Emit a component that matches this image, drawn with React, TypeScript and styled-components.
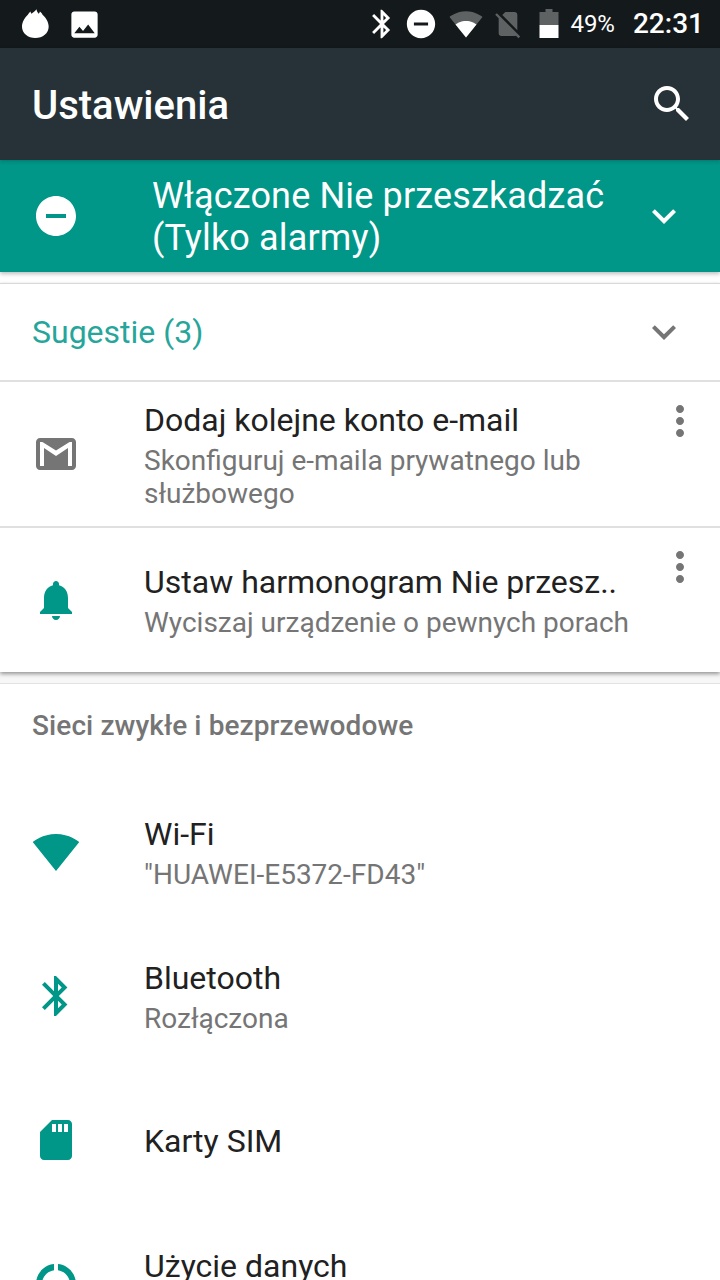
import React, { FunctionComponent } from 'react'
import styled, { createGlobalStyle } from 'styled-components'

const TEAL = '#009688'
const GREY = '#757575'

const PATHS = {
	search: 'M15.5 14h-.79l-.28-.27C15.41 12.59 16 11.11 16 9.5 16 5.91 13.09 3 9.5 3S3 5.91 3 9.5 5.91 16 9.5 16c1.61 0 3.09-.59 4.23-1.57l.27.28v.79l5 4.99L20.49 19l-4.99-5zm-6 0C7.01 14 5 11.99 5 9.5S7.01 5 9.5 5 14 7.01 14 9.5 11.99 14 9.5 14z',
	dnd: 'M12 2C6.48 2 2 6.48 2 12s4.48 10 10 10 10-4.48 10-10S17.52 2 12 2zm5 11H7v-2h10v2z',
	chevron: 'M7.41 8.59L12 13.17l4.59-4.58L18 10l-6 6-6-6 1.41-1.41z',
	more: 'M12 8c1.1 0 2-.9 2-2s-.9-2-2-2-2 .9-2 2 .9 2 2 2zm0 2c-1.1 0-2 .9-2 2s.9 2 2 2 2-.9 2-2-.9-2-2-2zm0 6c-1.1 0-2 .9-2 2s.9 2 2 2 2-.9 2-2-.9-2-2-2z',
	mail: 'M20 4H4c-1.1 0-1.99.9-1.99 2L2 18c0 1.1.9 2 2 2h16c1.1 0 2-.9 2-2V6c0-1.1-.9-2-2-2zm0 14h-2V9l-6 3.99L6 9v9H4V6h1.2l6.8 4.25L18.8 6H20v12z',
	bell: 'M12 22c1.1 0 2-.9 2-2h-4c0 1.1.89 2 2 2zm6-6v-5c0-3.07-1.64-5.64-4.5-6.32V4c0-.83-.67-1.5-1.5-1.5s-1.5.67-1.5 1.5v.68C7.63 5.36 6 7.92 6 11v5l-2 2v1h16v-1l-2-2z',
	wifi: 'M12.01 21.49L23.64 7c-.45-.34-4.93-4-11.64-4C5.28 3 .81 6.66.36 7l11.63 14.49.01.01.01-.01z',
	bluetooth: 'M17.71 7.71L12 2h-1v7.59L6.41 5 5 6.41 10.59 12 5 17.59 6.41 19 11 14.41V22h1l5.71-5.71-4.3-4.29 4.3-4.29zM13 5.83l1.88 1.88L13 9.59V5.83zm1.88 10.46L13 18.17v-3.76l1.88 1.88z',
	sim: 'M18 2h-8L4.02 8 4 20c0 1.1.9 2 2 2h12c1.1 0 2-.9 2-2V4c0-1.1-.9-2-2-2zm-6 6h-2V4h2v4zm3 0h-2V4h2v4zm3 0h-2V4h2v4z',
	data: 'M13 2.05v3.03c3.39.49 6 3.39 6 6.92 0 .9-.18 1.75-.48 2.54l2.6 1.53c.56-1.24.88-2.62.88-4.07 0-5.18-3.95-9.45-9-9.95zM12 19c-3.87 0-7-3.13-7-7 0-3.53 2.61-6.43 6-6.92V2.05c-5.06.5-9 4.76-9 9.95 0 5.52 4.47 10 9.99 10 3.31 0 6.24-1.61 8.06-4.09l-2.6-1.53C16.17 17.98 14.21 19 12 19z',
	fire: 'M12.4 1c.2 1.500.8 2.600 1.600 3.300.5-.4.8-1 .9-1.700 1 .7 1.600 1.500 2 2.400 2.700 2.300 4.600 5.600 4.600 9 0 4.900-4.500 8.500-10 8.500S1.500 18.900 1.500 14c0-3.400 1.900-6.600 4.400-9 .5-.9 1.100-1.700 2-2.300.1.700.3 1.200.7 1.600C9.800 3.500 11.400 2.300 12.400 1z',
	photo: 'M21 19V5c0-1.1-.9-2-2-2H5c-1.1 0-2 .9-2 2v14c0 1.1.9 2 2 2h14c1.1 0 2-.9 2-2zM8.500 13.500l2.500 3.010L14.500 12l4.500 6H5l3.500-4.500z',
	simOff: 'M19 5c0-1.100-.9-2-2-2h-7L7.700 5.300 19 16.600V5zM3.650 3.880L2.380 5.150 5 7.770V19c0 1.100.9 2 2 2h10c.35 0 .68-.1.97-.26l1.880 1.880 1.270-1.270L3.650 3.880z',
}

const GlobalStyle = createGlobalStyle`
	html,
	body {
		margin: 0;
		padding: 0;
		background: #fff;
	}

	body {
		font-family: Roboto, 'Noto Sans', sans-serif;
	}
`

const Screen = styled.div`
	width: 720px;
	height: 1280px;
	overflow: hidden;
	display: flex;
	flex-direction: column;
	background: #fff;
`

const StatusBar = styled.div`
	height: 48px;
	flex: none;
	display: flex;
	align-items: center;
	justify-content: space-between;
	background: #14191c;
	color: #fff;
`

const StatusGroup = styled.div<{ $left?: boolean }>`
	display: flex;
	align-items: center;
	padding: ${(props) => (props.$left ? '0 0 0 20px' : '0 16px 0 0')};
`

const Glyph = styled.svg<{ $size: number; $gap?: number; $color?: string }>`
	flex: none;
	display: block;
	width: ${(props) => props.$size}px;
	height: ${(props) => props.$size}px;
	margin-left: ${(props) => props.$gap ?? 0}px;
	fill: ${(props) => props.$color ?? 'currentColor'};
`

const BatteryText = styled.span`
	font-size: 24px;
	margin-left: 6px;
	line-height: 48px;
`

const Clock = styled.span`
	font-size: 28px;
	font-weight: 500;
	margin-left: 18px;
	line-height: 48px;
`

const Toolbar = styled.div`
	height: 112px;
	flex: none;
	display: flex;
	align-items: center;
	justify-content: space-between;
	padding: 0 24px 0 32px;
	box-sizing: border-box;
	background: #263238;
	color: #fff;
	position: relative;
	z-index: 3;
	box-shadow: 0 1px 4px rgba(0, 0, 0, 0.22);
`

const ToolbarTitle = styled.div`
	font-size: 40px;
	font-weight: 500;
	padding-top: 2px;
`

const Banner = styled.div`
	height: 112px;
	flex: none;
	display: flex;
	align-items: center;
	padding: 0 32px;
	box-sizing: border-box;
	background: ${TEAL};
	color: #fff;
	box-shadow: 0 2px 4px rgba(0, 0, 0, 0.25);
	position: relative;
	z-index: 2;
`

const BannerText = styled.div`
	flex: 1;
	font-size: 36px;
	line-height: 42px;
	letter-spacing: 0.15px;
	padding: 2px 0 0 72px;
`

const Card = styled.div`
	flex: none;
	margin-top: 11px;
	background: #fff;
	border-top: 1px solid #d8d8d8;
	box-shadow: 0 2px 4px rgba(0, 0, 0, 0.4);
	position: relative;
	z-index: 1;
`

const Backdrop = styled.div`
	flex: none;
	height: 12px;
	background: #f7f7f7;
	border-bottom: 1px solid #e2e2e2;
	box-sizing: border-box;
`

const CardHeader = styled.div`
	height: 98px;
	display: flex;
	align-items: center;
	padding: 0 32px;
	box-sizing: border-box;
	border-bottom: 2px solid #e0e0e0;
`

const CardTitle = styled.div`
	flex: 1;
	font-size: 32px;
	color: #26a69a;
`

const Suggestion = styled.div<{ $height: number; $divider?: boolean }>`
	height: ${(props) => props.$height}px;
	box-sizing: border-box;
	display: flex;
	align-items: center;
	padding: 0 16px 0 32px;
	border-bottom: ${(props) => (props.$divider ? '2px solid #e0e0e0' : 'none')};
`

const RowBody = styled.div<{ $nudge?: number }>`
	flex: 1;
	min-width: 0;
	padding: ${(props) => props.$nudge ?? 0}px 0 0 64px;
`

const Title = styled.div`
	font-size: 32px;
	line-height: 40px;
	color: #212121;
`

const Summary = styled.div`
	font-size: 28px;
	line-height: 33px;
	color: ${GREY};
	margin-top: 4px;
`

const Overflow = styled.div`
	align-self: flex-start;
	margin-top: 15px;
`

const SectionLabel = styled.div`
	height: 96px;
	flex: none;
	padding: 25px 32px 0;
	box-sizing: border-box;
	font-size: 28px;
	line-height: 33px;
	font-weight: 500;
	letter-spacing: 0.1px;
	color: ${GREY};
`

const SettingRow = styled.div`
	height: 144px;
	flex: none;
	display: flex;
	align-items: center;
	padding: 0 32px;
	box-sizing: border-box;
`

const Icon: FunctionComponent<{
	d: string
	size?: number
	gap?: number
	color?: string
}> = ({ d, size = 48, gap, color }) => (
	<Glyph viewBox="0 0 24 24" $size={size} $gap={gap} $color={color}>
		<path d={d} fillRule="evenodd" />
	</Glyph>
)

const SETTINGS = [
	{ icon: PATHS.wifi, title: 'Wi-Fi', summary: '"HUAWEI-E5372-FD43"' },
	{ icon: PATHS.bluetooth, title: 'Bluetooth', summary: 'Rozłączona' },
	{ icon: PATHS.sim, title: 'Karty SIM' },
	{ icon: PATHS.data, title: 'Użycie danych', summary: '\u00a0' },
]

export default function App() {
	return (
		<Screen>
			<GlobalStyle />
			<StatusBar>
				<StatusGroup $left>
					<Icon d={PATHS.fire} size={32} />
					<Icon d={PATHS.photo} size={35} gap={15} />
				</StatusGroup>
				<StatusGroup>
					<Icon d={PATHS.bluetooth} size={34} />
					<Icon d={PATHS.dnd} size={34} gap={5} />
					<Glyph viewBox="0 0 24 24" $size={34} $gap={11}>
						<path d={PATHS.wifi} fill="#5f6263" />
						<path d="M12 21.490L19.400 12.300C18.300 11.400 15.500 9.800 12 9.800S5.700 11.400 4.600 12.300z" />
					</Glyph>
					<Icon d={PATHS.simOff} size={32} gap={9} color="#5f6263" />
					<Glyph viewBox="0 0 19 30" $size={30} $gap={10}>
						<path d="M6 0h7v3h6v13H0V3h6z" fill="#5f6263" />
						<path d="M0 16h19v13H0z" />
					</Glyph>
					<BatteryText>49%</BatteryText>
					<Clock>22:31</Clock>
				</StatusGroup>
			</StatusBar>
			<Toolbar>
				<ToolbarTitle>Ustawienia</ToolbarTitle>
				<Icon d={PATHS.search} />
			</Toolbar>
			<Banner>
				<Icon d={PATHS.dnd} />
				<BannerText>
					Włączone Nie przeszkadzać
					<br />
					(Tylko alarmy)
				</BannerText>
				<Icon d={PATHS.chevron} />
			</Banner>
			<Card>
				<CardHeader>
					<CardTitle>Sugestie (3)</CardTitle>
					<Icon d={PATHS.chevron} color={GREY} />
				</CardHeader>
				<Suggestion $height={146} $divider>
					<Icon d={PATHS.mail} color={GREY} />
					<RowBody $nudge={2}>
						<Title>Dodaj kolejne konto e-mail</Title>
						<Summary>
							Skonfiguruj e-maila prywatnego lub
							<br />
							służbowego
						</Summary>
					</RowBody>
					<Overflow>
						<Icon d={PATHS.more} color={GREY} />
					</Overflow>
				</Suggestion>
				<Suggestion $height={144}>
					<Icon d={PATHS.bell} color={TEAL} />
					<RowBody>
						<Title>Ustaw harmonogram Nie przesz..</Title>
						<Summary>Wyciszaj urządzenie o pewnych porach</Summary>
					</RowBody>
					<Overflow>
						<Icon d={PATHS.more} color={GREY} />
					</Overflow>
				</Suggestion>
			</Card>
			<Backdrop />
			<SectionLabel>Sieci zwykłe i bezprzewodowe</SectionLabel>
			{SETTINGS.map((item) => (
				<SettingRow key={item.title}>
					<Icon d={item.icon} color={TEAL} />
					<RowBody $nudge={item.summary ? 0 : 2}>
						<Title>{item.title}</Title>
						{item.summary ? <Summary>{item.summary}</Summary> : null}
					</RowBody>
				</SettingRow>
			))}
		</Screen>
	)
}
